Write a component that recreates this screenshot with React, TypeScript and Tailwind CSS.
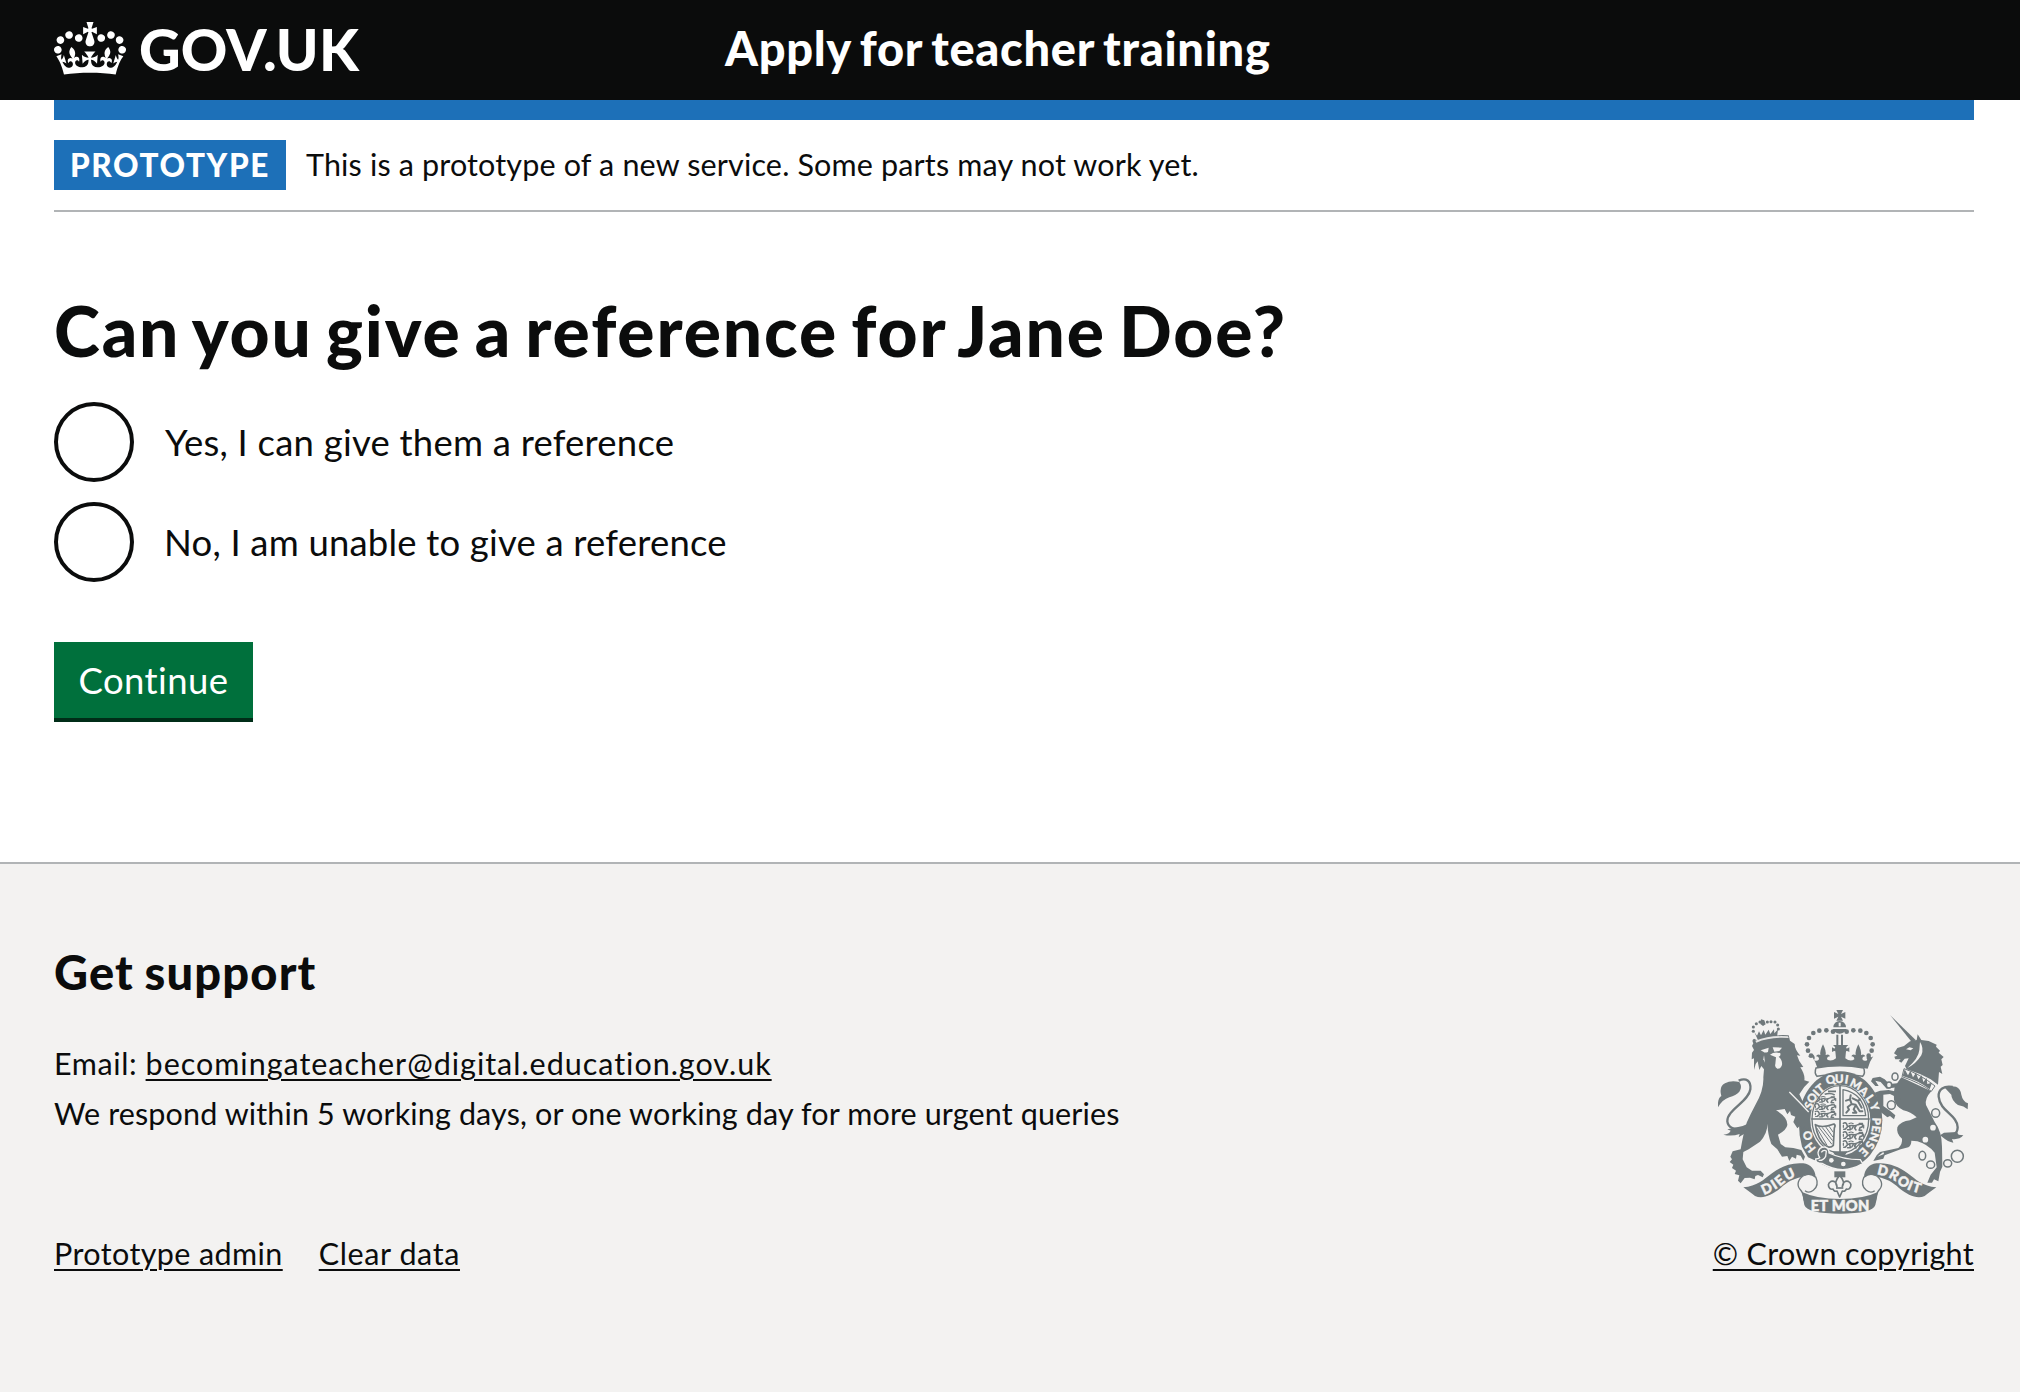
import React from 'react';

const SHADE = '#6f787b';
const PAPER = '#f3f2f1';

function Crown() {
  return (
    <svg viewBox="0 0 132 97" className="h-[53px] w-[72px]" fill="currentColor" aria-hidden="true">
      <path d="M25 30.2c3.5 1.5 7.7-.2 9.1-3.7 1.5-3.6-.2-7.8-3.9-9.2-3.6-1.4-7.6.3-9.1 3.9-1.4 3.5.3 7.5 3.9 9zM9 39.5c3.6 1.5 7.8-.2 9.2-3.7 1.5-3.6-.2-7.8-3.9-9.1-3.6-1.5-7.6.2-9.1 3.8-1.4 3.5.3 7.5 3.8 9zM4.4 57.2c3.5 1.5 7.7-.2 9.1-3.8 1.5-3.6-.2-7.7-3.9-9.1-3.5-1.5-7.6.3-9.1 3.8-1.4 3.5.3 7.6 3.9 9.1zm38.3-21.4c3.5 1.5 7.7-.2 9.1-3.8 1.5-3.6-.2-7.7-3.9-9.1-3.6-1.5-7.6.3-9.1 3.8-1.3 3.6.4 7.7 3.9 9.1zm64.4-5.6c-3.6 1.5-7.8-.2-9.1-3.7-1.5-3.6.2-7.8 3.8-9.2 3.6-1.4 7.7.3 9.2 3.9 1.3 3.5-.4 7.5-3.9 9zm15.9 9.3c-3.6 1.5-7.7-.2-9.1-3.7-1.5-3.6.2-7.8 3.7-9.1 3.6-1.5 7.7.2 9.2 3.8 1.5 3.5-.3 7.5-3.8 9zm4.7 17.7c-3.6 1.5-7.8-.2-9.2-3.8-1.5-3.6.2-7.7 3.9-9.1 3.6-1.5 7.7.3 9.2 3.8 1.3 3.5-.4 7.6-3.9 9.1zM89.3 35.8c-3.6 1.5-7.8-.2-9.2-3.8-1.4-3.6.2-7.7 3.9-9.1 3.6-1.5 7.7.3 9.2 3.8 1.4 3.6-.3 7.7-3.9 9.1zM69.7 17.7l8.9 4.7V9.3l-8.9 2.8c-.2-.3-.5-.6-.9-.9L72.4 0H59.6l3.5 11.2c-.3.3-.6.5-.9.9l-8.8-2.8v13.1l8.8-4.7c.3.3.6.7.9.9l-5 15.4v.1c-.2.8-.4 1.6-.4 2.4 0 4.1 3.1 7.5 7 8.1h.2c.3 0 .7.1 1 .1.4 0 .7 0 1-.1h.2c4-.6 7.1-4.1 7.1-8.1 0-.8-.1-1.7-.4-2.4V34l-5.1-15.4c.4-.2.7-.6 1-.9zM66 92.8c16.9 0 32.8 1.1 47.1 3.2 4-16.9 8.9-26.7 14-33.5l-9.6-3.4c1 4.9 1.1 7.2 0 10.2-1.5-1.4-3-4.3-4.2-8.7L108.6 76c2.8-2 5-3.2 7.5-3.3-4.4 9.4-10 11.9-13.6 11.2-4.3-.8-6.3-4.6-5.6-7.9 1-4.7 5.7-5.9 8-.5 4.3-8.7-3-11.4-7.6-8.8 7.1-7.2 7.9-13.5 2.1-21.1-8 6.1-8.1 12.3-4.5 20.8-4.7-5.4-12.1-2.5-9.5 6.2 3.4-5.2 7.9-2 7.2 3.1-.6 4.3-6.4 7.8-13.5 7.2-10.3-.9-10.9-8-11.2-13.8 2.5-.5 7.1 1.8 11 7.3L80.2 60c-4.1 4.4-8 5.3-12.3 5.4 1.4-4.4 8-11.6 8-11.6H55.5s6.4 7.2 7.9 11.6c-4.2-.1-8-1-12.3-5.4l1.4 16.4c3.9-5.5 8.5-7.7 10.9-7.3-.3 5.8-.9 12.8-11.1 13.8-7.2.6-12.9-2.9-13.5-7.2-.7-5 3.8-8.3 7.1-3.1 2.7-8.7-4.6-11.6-9.4-6.2 3.7-8.5 3.6-14.7-4.6-20.8-5.8 7.6-5 13.9 2.2 21.1-4.7-2.6-11.9.1-7.7 8.8 2.3-5.5 7.1-4.2 8.1.5.7 3.3-1.3 7.1-5.7 7.9-3.5.7-9-1.8-13.5-11.2 2.5.1 4.7 1.3 7.5 3.3l-4.7-15.4c-1.2 4.4-2.7 7.2-4.3 8.7-1.1-3-.9-5.3 0-10.2l-9.5 3.4c5 6.9 9.9 16.7 14 33.5 14.8-2.1 30.8-3.2 47.7-3.2z" />
    </svg>
  );
}

// Letters round the garter: glyph, x, y, rotation in degrees.
const MOTTO: [string, number, number, number][] = [
  ['H', 360, 473, 232], ['O', 353, 437, 252],
  ['S', 356, 347, -66], ['O', 366, 324, -55], ['I', 378, 308, -46], ['T', 390, 295, -38],
  ['Q', 421, 268, -15], ['U', 448, 266, -1], ['I', 470, 268, 9],
  ['M', 498, 282, 26], ['A', 522, 303, 42], ['L', 541, 325, 56], ['Y', 555, 350, 70],
  ['P', 560, 394, 92], ['E', 559, 417, 99], ['N', 553, 441, 107], ['S', 541, 466, 122], ['E', 522, 486, 135],
];

const ARCH_DOTS: [number, number][] = [
  [429, 125], [409, 121], [388, 122], [370, 129], [357, 144], [351, 163], [354, 182], [363, 197],
];

const CHAIN: [number, number, number, number][] = [
  [615, 260, 9, 11], [597, 285, 8, 9], [604, 345, 12, 13], [737, 369, 12, 13],
  [697, 497, 10, 13], [722, 524, 12, 11], [773, 520, 12, 11], [802, 499, 18, 18],
];

const LION_CROWN_DOTS: [number, number][] = [
  [190, 124], [190, 111], [199, 101], [210, 96], [232, 96], [243, 95], [255, 96], [263, 105], [265, 117],
];

function Ribbon() {
  return (
    <g>
      <path fill={SHADE} d="M160 592C200 590 222 568 246 550C275 528 305 517 340 520C362 523 376 538 377 563C361 552 346 550 334 562C310 566 292 576 272 594C245 616 218 628 195 618Q182 608 160 592Z" />
      <path fill={PAPER} stroke={SHADE} strokeWidth="4" d="M377 560C386 580 381 592 370 601C360 609 350 606 345 602M345 555C322 566 320 586 330 598C338 606 341 615 343 632M344 556C358 549 368 554 377 562" />
    </g>
  );
}

function Lions() {
  return (
    <g fill="none" stroke={SHADE} strokeWidth="4.5" strokeLinecap="round" strokeLinejoin="round">
      {[0, 27, 54].map((y) => (
        <g key={y} transform={`translate(0 ${y})`}>
          <path d="M2 3q5-4 9 1l3 9q8-5 17-3 6 1 13-3l8-2q6 0 5 6-1 5-7 4l-3 9h7M14 13l-7 8H3M20 12l2 10h-8M38 11l-4 6 4 6M30 13l-4 7" />
          <path d="M47 3h10M60 8v9M2 9v6M30 4q-6-4-12 0" strokeWidth="3.5" />
        </g>
      ))}
    </g>
  );
}

function RoyalArms() {
  return (
    <svg viewBox="84 60 750 612" className="h-[204px] w-[250px]" aria-hidden="true">
      {/* Large crown */}
      <g fill={SHADE}>
        <path d="M439 60h20l-6 12 13-6v20l-13-6 6 12h-20l6-12-13 6V66l13 6z" />
        <path d="M430 112a19 19 0 0 1 38 0zM428 117h42q-6 13-21 14-15-1-21-14z" />
        <path d="M439 134h6v36h-6zM453 134h6v36h-6z" />
        {ARCH_DOTS.map(([x, y]) => (
          <g key={y}>
            <circle cx={x} cy={y} r="7" />
            <circle cx={899 - x} cy={y} r="7" />
          </g>
        ))}
        <path d="M359 200q9 10 14-6 10 9 4 18 9 6 15-2 0-9-9-9 4-9 13-4-2-13 8-32 10 19 8 32 10-5 13 4-9 0-9 9 12 9 27-3l-2-21q-3-2-10 2v-14q7 5 10 2-1-4-7-9h46q-6 5-7 9 3 3 10-2v14q-7-4-10-2l-2 21q15 12 27 3 0-9-9-9 3-9 13-4-2-13 8-32 10 19 8 32 9-5 13 4-9 0-9 9 6 8 15 2-6-9 4-18 5 16 14 6-12 18-17 38-74-14-150 0-5-20-18-38z" transform="translate(-5 -2)" />
      </g>
      <path fill={PAPER} stroke={SHADE} strokeWidth="4.5" d="M378 234q72-14 143 0 6 15-3 25-70-13-137 0-9-10-3-25z" />
      <path fill={PAPER} d="M446 98h6v11h-6z" />

      {/* Garter and shield */}
      <ellipse cx="452" cy="391" rx="125" ry="147" fill={SHADE} />
      <path fill={SHADE} d="M327 396L329 436L336 470L354 502L374 511L396 482L370 440L360 400Z" />
      <ellipse cx="451" cy="390" rx="90" ry="106" fill={PAPER} />
      <ellipse cx="451" cy="388" rx="85" ry="101" fill={PAPER} stroke={SHADE} strokeWidth="4" />
      <path stroke={SHADE} strokeWidth="5" d="M450 286v206M364 387h175" fill="none" />
      <g transform="translate(374 318) scale(1.05 .82)"><Lions /></g>
      <g transform="translate(458 397) scale(1.05 1)"><Lions /></g>
      <path d="M414 304h24M404 313q18-6 30 2" fill="none" stroke={SHADE} strokeWidth="5" />
      <g fill="none" stroke={SHADE} strokeLinecap="round" strokeLinejoin="round">
        <path strokeWidth="4" d="M459 377V299q62 12 68 78z" />
        <path strokeWidth="6" d="M468 332l12-4 5 14 12 2 12 20h8M485 342l-12 9 4 8-8 9M497 346l-6 12 8 10h-10M480 328l2-12M488 325l16 8 6-5M505 335l10 18" />
        <path strokeWidth="5" d="M376 404q20 12 56-2 6 4 1 12l-3 52q-9 10-22 2-25-20-32-64z" />
        <path strokeWidth="3" d="M387 412l38 50M397 413l30 38M408 412l20 28M381 415l30 51M418 410l11 16" />
      </g>
      <path fill={SHADE} d="M428 484h44l-8 14h-28z" />
      <path fill={SHADE} stroke={PAPER} strokeWidth="4" d="M384 488q3-18 21-17 13 4 12 18 42 20 94 20l7 12q-60 36-122-1-20 0-19-13 8-1 12-4-5-8-5-15z" />
      <path fill="none" stroke={PAPER} strokeWidth="4" d="M394 487q6-9 15-4l-2 16q-8 14-21 12" />
      <circle cx="424" cy="511" r="7" fill={PAPER} />
      <circle cx="460" cy="522" r="7" fill={PAPER} />
      <g fill={PAPER} stroke={PAPER} strokeWidth="1" fontFamily="Lato, sans-serif" fontWeight="900" fontSize="35" textAnchor="middle">
        {MOTTO.map(([ch, x, y, a], i) => (
          <text key={i} transform={`translate(${x} ${y}) rotate(${a})`} y="13">{ch}</text>
        ))}
      </g>

      {/* Fleur-de-lis pendant */}
      <path fill={SHADE} d="M433 544h33v18h-33z" />
      <path fill={PAPER} stroke={SHADE} strokeWidth="5" strokeLinejoin="round" d="M449 556q18 20 8 34 3-20 18-16 14 9 3 22-4 3-9 1-3 9-12 6l-8 18-8-18q-9 3-12-6-5 2-9-1-11-13 3-22 15-4 18 16-10-14 8-34z" />
      <path stroke={SHADE} strokeWidth="5" d="M438 594h22" />

      {/* Lion */}
      <g fill={SHADE}>
        <path d="M186 168L190 160Q184 150 192 146L204 152Q245 132 296 136L300 152L314 162Q314 178 331 197L321 196Q326 215 340 231L331 232Q346 255 343 271L358 275Q340 290 328 313L336 330L352 360L360 408L351 422L343 410L338 418L330 407L322 415L310 396L316 380L303 375L300 363L292 373L284 357L258 361Q293 382 292 405Q290 420 264 434L272 462L286 472L310 474L334 480L345 500L340 512L332 497L320 494L318 506L306 500L298 513L292 498L276 500L262 478L244 462Q232 430 233 400Q232 432 210 455L176 478L160 486L158 508L170 532L186 542L212 542L222 553L218 562L204 555L196 558L194 568L180 563L164 564L152 580L144 572L148 556L134 552L138 542L126 534L130 524L119 516L126 508L121 500L128 484L152 478Q160 430 170 398Q180 375 196 345Q222 300 220 262L222 238L214 228L208 240L203 214L197 222L192 240L192 205L185 208L186 188L192 180Z" />
        <path d="M84 352Q82 325 94 318Q86 290 105 280Q122 270 148 276Q158 292 148 305Q138 316 118 322Q98 328 84 352Z" />
        <path d="M100 434Q118 432 122 422L112 418Q140 412 158 408L172 402L166 430Q152 438 146 442L149 432Q125 440 100 434Z" />
        <path fill="none" stroke={SHADE} strokeWidth="7" d="M146 272C168 262 184 272 181 298C176 335 110 360 112 394C114 410 130 422 156 414" />
        <path d="M205 153L193 126L201 137L207 124L213 136L221 120L226 134L236 119L241 132L252 118L253 130L264 118L261 142Q230 140 205 153Z" />
        {LION_CROWN_DOTS.map(([x, y]) => (
          <circle key={`${x}-${y}`} cx={x} cy={y} r="4.6" />
        ))}
        <path d="M213 88l10 3 4 12-8 5-8-6z" />
      </g>
      <g fill={PAPER}>
        <path d="M196 152Q240 135 294 139L296 144Q240 140 199 158Z" opacity=".9" />
        <path d="M212 181l24-8-2 13q-10 3-13 0zM248 172l28 1-8 10-15 2zM240 194q14-11 31-4 2 8-5 10 12 10 10 25-4 12-14 11-9-5-6-14l2-20z" />
        <path d="M222 196l-2 12 5 10z" />
      </g>
      <path fill="none" stroke={PAPER} strokeWidth="4" d="M298 306Q330 338 356 366" />

      {/* Unicorn */}
      <g fill={SHADE}>
        <path d="M600 75L677 150L667 158Z" />
        <path d="M612 190L622 174L642 168L660 154L680 150L683 133L694 150L716 153L740 164L738 170L750 182L746 188L761 201L754 208L758 225L752 230L757 252L747 246L744 284L722 268L690 252L650 238L645 228L656 205L644 206L634 218L626 213L632 208L616 208L613 200L622 197Z" />
        <path d="M634 262L724 304Q704 325 708 345Q722 372 734 396Q756 425 756 470L757 530L750 546L745 574L732 568L726 578L712 578L722 554L740 532L734 488Q712 462 682 454L664 452Q664 466 655 472L632 478L584 496L580 506L550 513L560 496L570 486L625 474Q638 462 636 446Q618 432 622 412Q632 394 660 391L680 382Q662 366 640 361Q618 350 612 330Q610 308 614 290Z" />
        <path d="M620 292L590 296L572 276L556 272L566 288L556 288L543 274L548 264L570 260L584 268L598 282L622 280ZM632 328L600 312L580 314L580 348L600 362L616 376L612 388L600 378L592 382L572 366L560 320L554 308L570 302L596 300L624 306Z" />
        <path d="M765 294Q778 286 798 290Q812 296 814 314Q818 334 834 340L833 358Q822 348 804 345Q784 330 784 314Z" />
        <path d="M750 436L762 428L800 426L806 434L820 436Q808 450 786 447L790 458Q774 456 758 442Z" />
        <path fill="none" stroke={SHADE} strokeWidth="7" d="M788 291C762 286 744 298 746 320C750 365 802 374 803 412C802 436 784 440 762 434" />
      </g>
      <path fill={PAPER} stroke={SHADE} strokeWidth="3" d="M642 236Q690 252 735 288L724 304Q690 278 636 260Z" />
      <path fill={SHADE} d="M638 258l6-20 10 18 7-14 8 20 9-14 7 20 10-12 5 20 10-12 2 18 14-4-7 20q-30-25-81-40z" />
      <g fill={PAPER}>
        <path d="M648 178l10-6 12 3-8 6zM690 156Q703 175 694 196Q678 222 652 234Q686 205 688 180Z" />
        <circle cx="729" cy="413" r="8.5" />
        <circle cx="706" cy="449" r="8.5" />
        <path d="M562 500l18-14 2 6z" />
      </g>
      <g fill={PAPER} stroke={SHADE} strokeWidth="4.5">
        {CHAIN.map(([x, y, rx, ry]) => (
          <ellipse key={`${x}-${y}`} cx={x} cy={y} rx={rx} ry={ry} />
        ))}
      </g>

      {/* Motto scroll */}
      <Ribbon />
      <g transform="translate(899 0) scale(-1 1)"><Ribbon /></g>
      <path fill={SHADE} d="M336 606Q380 627 450 627Q520 627 564 606Q560 630 556 645Q548 671 450 671Q352 671 343 645Z" />
      <path id="scroll-left" fill="none" d="M222 615Q260 600 284 578Q304 562 334 555" />
      <path id="scroll-right" fill="none" d="M560 553Q600 558 628 584Q654 604 702 613" />
      <g fill={PAPER} stroke={PAPER} strokeWidth="1.5" fontFamily="Lato, sans-serif" fontWeight="900">
        <text fontSize="41"><textPath href="#scroll-left" textLength="112">DIEU</textPath></text>
        <text fontSize="41"><textPath href="#scroll-right" textLength="142">DROIT</textPath></text>
        <text x="362" y="662" fontSize="44" textLength="176">ET MON</text>
      </g>
    </svg>
  );
}

const LINK = 'underline decoration-2 underline-offset-[4px] [text-decoration-skip-ink:auto]';

function Radio({ label, className }: { label: string; className: string }) {
  return (
    <label className="flex items-center">
      <input type="radio" name="can-give" className="size-20 shrink-0 appearance-none rounded-full border-4 border-[#0b0c0c] bg-white" />
      <span className={className}>{label}</span>
    </label>
  );
}

export default function App() {
  return (
    <div className="flex min-h-[1392px] flex-col bg-white font-['Lato',sans-serif] text-[30.5px] text-[#0b0c0c]">
      <header className="flex h-[100px] items-center bg-[#0b0c0c] pb-1 pl-[54px] text-white">
        <a className="flex w-[671px] items-center">
          <Crown />
          <span className="mt-0.5 ml-[13px] text-[57.5px] leading-[74px] font-black tracking-[0.2px]">GOV.UK</span>
        </a>
        <span className="text-[47px] leading-[60px] font-black tracking-[0.69px] [word-spacing:-2.9px]">Apply for teacher training</span>
      </header>

      <div className="mr-[46px] ml-[54px]">
        <div className="h-5 bg-[#1d70b8]" />
        <div className="flex items-start border-b-2 border-[#b1b4b6] py-5 whitespace-nowrap">
          <strong className="h-[50px] w-[232px] bg-[#1d70b8] pl-4 text-[31.5px] leading-[51px] font-black tracking-[1.6px] text-white">PROTOTYPE</strong>
          <span className="ml-5 leading-[49px] tracking-[0.16px]">This is a prototype of a new service. Some parts may not work yet.</span>
        </div>

        <main className="flex flex-col items-start pt-[78px]">
          <h1 className="text-[69.5px] leading-[80px] font-black tracking-[1.87px] [word-spacing:-5.2px]">Can you give a reference for Jane Doe?</h1>
          <div className="mt-8 flex flex-col gap-5 text-[36.5px] leading-[50px]">
            <Radio label="Yes, I can give them a reference" className="ml-[31px] tracking-[0.22px]" />
            <Radio label="No, I am unable to give a reference" className="ml-[30px] tracking-[0.19px]" />
          </div>
          <button className="mt-[60px] h-20 w-[199px] border-b-4 border-[#002d18] bg-[#00703c] text-[36.5px] leading-[50px] tracking-[0.43px] text-white">Continue</button>
        </main>
      </div>

      <footer className="mt-[140px] flex grow items-start justify-between border-t-2 border-[#b1b4b6] bg-[#f3f2f1] pr-[46px] pl-[54px] leading-[50px]">
        <div className="pt-[78px]">
          <h2 className="text-[47px] leading-[60px] font-black tracking-[1.2px] [word-spacing:-2px]">Get support</h2>
          <p className="mt-9">
            <span className="tracking-[0.6px]">Email: </span>
            <a className={`tracking-[0.98px] ${LINK}`}>becomingateacher@digital.education.gov.uk</a>
          </p>
          <p className="tracking-[0.135px]">We respond within 5 working days, or one working day for more urgent queries</p>
          <div className="mt-[90px] flex gap-9">
            <a className={`tracking-[0.4px] ${LINK}`}>Prototype admin</a>
            <a className={`tracking-[0.6px] ${LINK}`}>Clear data</a>
          </div>
        </div>
        <div className="flex flex-col items-end pt-[146px]">
          <div className="mr-[6px]"><RoyalArms /></div>
          <a className={`mt-[14px] tracking-[0.32px] ${LINK}`}>© Crown copyright</a>
        </div>
      </footer>
    </div>
  );
}
